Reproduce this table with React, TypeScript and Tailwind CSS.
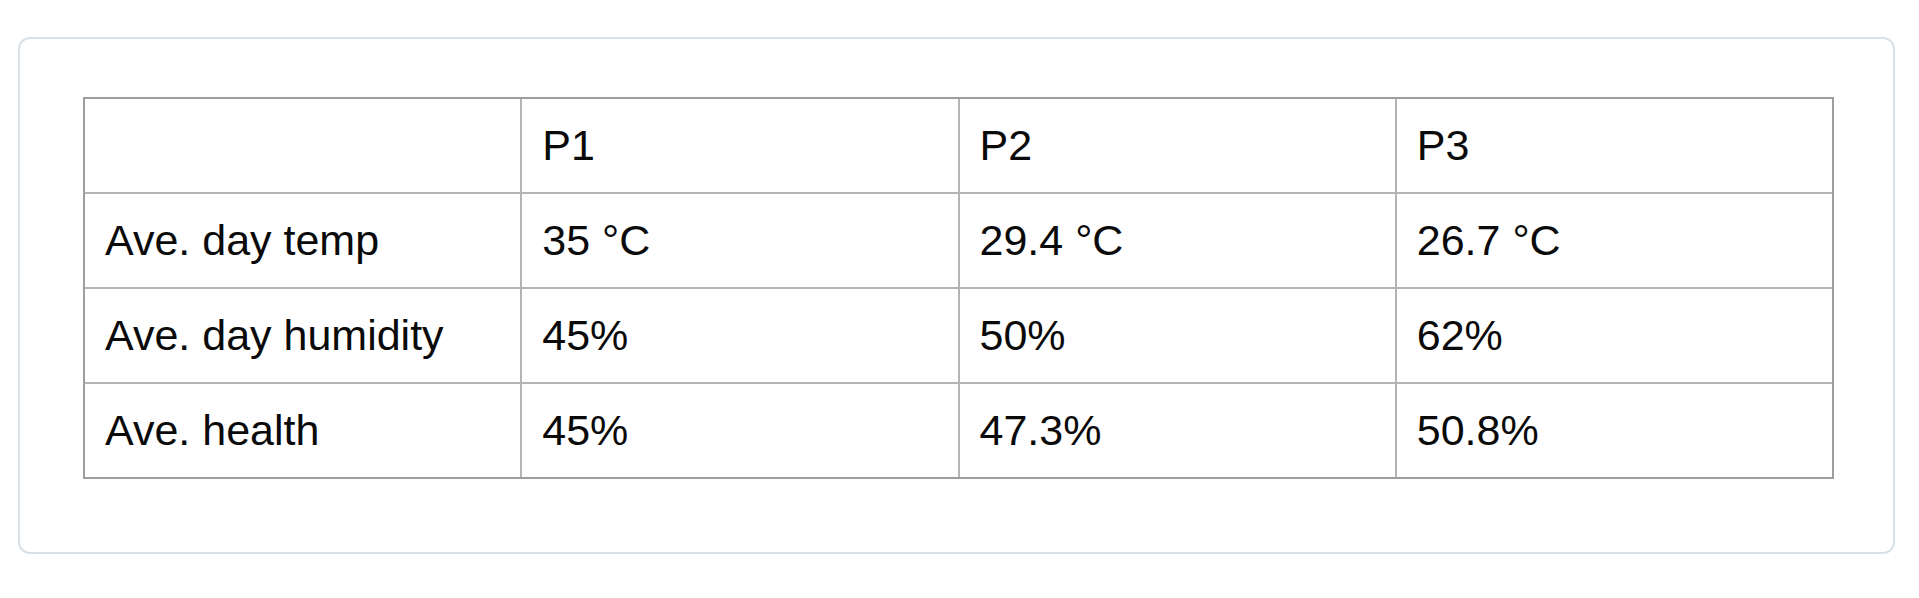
const header = ["", "P1", "P2", "P3"];

const rows = [
  ["Ave. day temp", "35 °C", "29.4 °C", "26.7 °C"],
  ["Ave. day humidity", "45%", "50%", "62%"],
  ["Ave. health", "45%", "47.3%", "50.8%"],
];

const Cell = ({ children }: { children: React.ReactNode }) => (
  <div className="flex h-[93px] items-center bg-white pl-[20px] text-[43px] leading-none text-[#0a0a0a]">
    {children}
  </div>
);

export default function App() {
  return (
    <div className="min-h-[598px] bg-white pt-[37px] font-['Liberation_Sans',Arial,sans-serif]">
      <div className="ml-[18px] w-[1877px] rounded-[12px] border-2 border-[#d8e1e7] pb-[73px] pl-[63px] pr-[59px] pt-[58px]">
        <div className="grid grid-cols-4 gap-[2px] border-2 border-[#9e9e9e] bg-[#b4b4b4]">
          {header.map((h, i) => (
            <Cell key={`h${i}`}>{h}</Cell>
          ))}
          {rows.map((row, r) =>
            row.map((c, i) => <Cell key={`${r}-${i}`}>{c}</Cell>)
          )}
        </div>
      </div>
    </div>
  );
}
